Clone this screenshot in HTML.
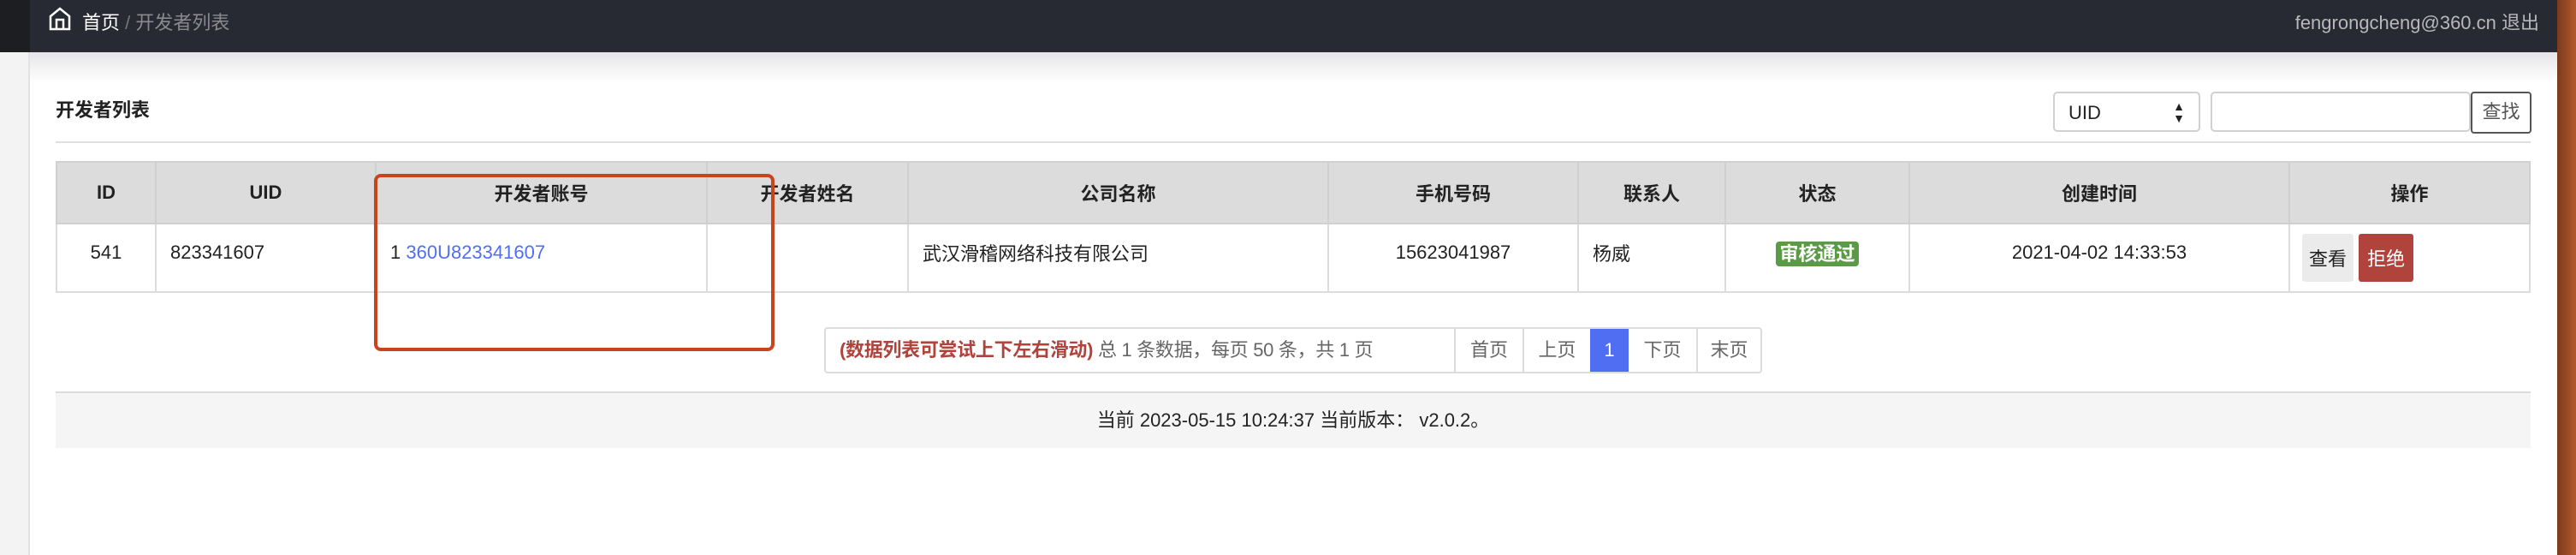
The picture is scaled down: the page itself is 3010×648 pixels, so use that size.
<!DOCTYPE html>
<html><head><meta charset="utf-8"><style>
*{margin:0;padding:0;box-sizing:border-box}
body{width:3010px;height:648px;overflow:hidden;background:#fff;font-family:"Liberation Sans","Noto Sans CJK SC",sans-serif;font-size:22px;color:#222;position:relative}
.abs{position:absolute}
.top{left:0;top:0;width:2988px;height:61px;background:#282a33}
.side{left:0;top:0;width:35px;height:61px;background:#1d1e22}
.lside{left:0;top:61px;width:35px;height:587px;background:#f3f3f4;border-right:2px solid #e2e2e4}
.shadow{left:35px;top:61px;width:2953px;height:36px;background:linear-gradient(#e6e6e8,#fff)}
.right{left:2988px;top:0;width:22px;height:648px;background:linear-gradient(90deg,#7a3a1c,#b45a2a)}
table{position:absolute;left:65px;top:188px;border-collapse:collapse;width:2892px}
td,th{border:2px solid #dcdcde;font-size:22px}
th{background:#dcdcdd;height:72px;font-weight:bold;text-align:center;border-color:#d0d0d2}
td{height:80px;padding:0 16px 12px}
.c{text-align:center}
</style></head><body>
<div class="abs top"></div><div class="abs side"></div>
<div class="abs lside"></div><div class="abs shadow"></div><div class="abs right"></div>
<svg class="abs" style="left:57px;top:8px" width="26" height="28" viewBox="0 0 26 28"><path d="M2 26V11L13 2L24 11V26Z M9 26V15H17V26" fill="none" stroke="#fff" stroke-width="2.5"/></svg>
<div class="abs" style="left:96px;top:9px;color:#fff;font-size:22px">首页 <span style="color:#777">/</span> <span style="color:#8a8a8e">开发者列表</span></div>
<div class="abs" style="right:43px;top:9px;color:#b8b8bc;font-size:22px">fengrongcheng@360.cn 退出</div>
<div class="abs" style="left:65px;top:111px;font-weight:bold;font-size:22px">开发者列表</div>
<div class="abs" style="left:65px;top:165px;width:2892px;height:2px;background:#dedee0"></div>
<div class="abs" style="left:2399px;top:107px;width:172px;height:47px;border:2px solid #d0d0d3;border-radius:5px;padding:10px 16px">UID<span style="position:absolute;right:16px;top:8px;font-size:14px;line-height:14px">▲<br>▼</span></div>
<div class="abs" style="left:2583px;top:107px;width:304px;height:47px;border:2px solid #d0d0d3;border-radius:5px"></div>
<div class="abs" style="left:2887px;top:107px;width:71px;height:49px;border:2px solid #555;border-radius:4px;text-align:center;line-height:44px;color:#555">查找</div>
<table>
<tr><th style="width:116px">ID</th><th style="width:257px">UID</th><th style="width:387px">开发者账号</th><th style="width:235px">开发者姓名</th><th style="width:491px">公司名称</th><th style="width:292px">手机号码</th><th style="width:172px">联系人</th><th style="width:215px">状态</th><th style="width:444px">创建时间</th><th>操作</th></tr>
<tr><td class="c">541</td><td>823341607</td><td>1 <span style="color:#4f6ef2">360U823341607</span></td><td></td><td>武汉滑稽网络科技有限公司</td><td class="c">15623041987</td><td>杨威</td><td class="c"><span style="background:#5b9a47;color:#fff;font-weight:bold;padding:2px 4px;border-radius:4px">审核通过</span></td><td class="c">2021-04-02 14:33:53</td><td style="padding:0 0 0 14px"><span style="display:inline-block;background:#ebebeb;padding:12px 8px;border-radius:3px">查看</span> <span style="display:inline-block;background:#b0433c;color:#fff;padding:12px 10px;border-radius:3px">拒绝</span></td></tr>
</table>
<div class="abs" style="left:437px;top:203px;width:468px;height:207px;border:4px solid #c9441c;border-radius:8px"></div>
<div class="abs" style="left:963px;top:382px;width:1096px;height:54px;border:2px solid #dcdcde;border-radius:4px;display:flex;line-height:50px;color:#666">
<div style="width:734px;padding-left:16px;letter-spacing:-0.3px"><b style="color:#b0433c">(数据列表可尝试上下左右滑动)</b> 总 1 条数据，每页 50 条，共 1 页</div>
<div style="width:80px;border-left:2px solid #dcdcde;text-align:center">首页</div>
<div style="width:79px;border-left:2px solid #dcdcde;text-align:center">上页</div>
<div style="width:45px;background:#4f6ef2;color:#fff;text-align:center">1</div>
<div style="width:79px;text-align:center">下页</div>
<div style="flex:1;border-left:2px solid #dcdcde;text-align:center">末页</div>
</div>
<div class="abs" style="left:65px;top:457px;width:2892px;height:66px;background:#f5f5f5;border-top:2px solid #dcdcde;text-align:center;line-height:64px">当前 2023-05-15 10:24:37 当前版本： v2.0.2。</div>
</body></html>
